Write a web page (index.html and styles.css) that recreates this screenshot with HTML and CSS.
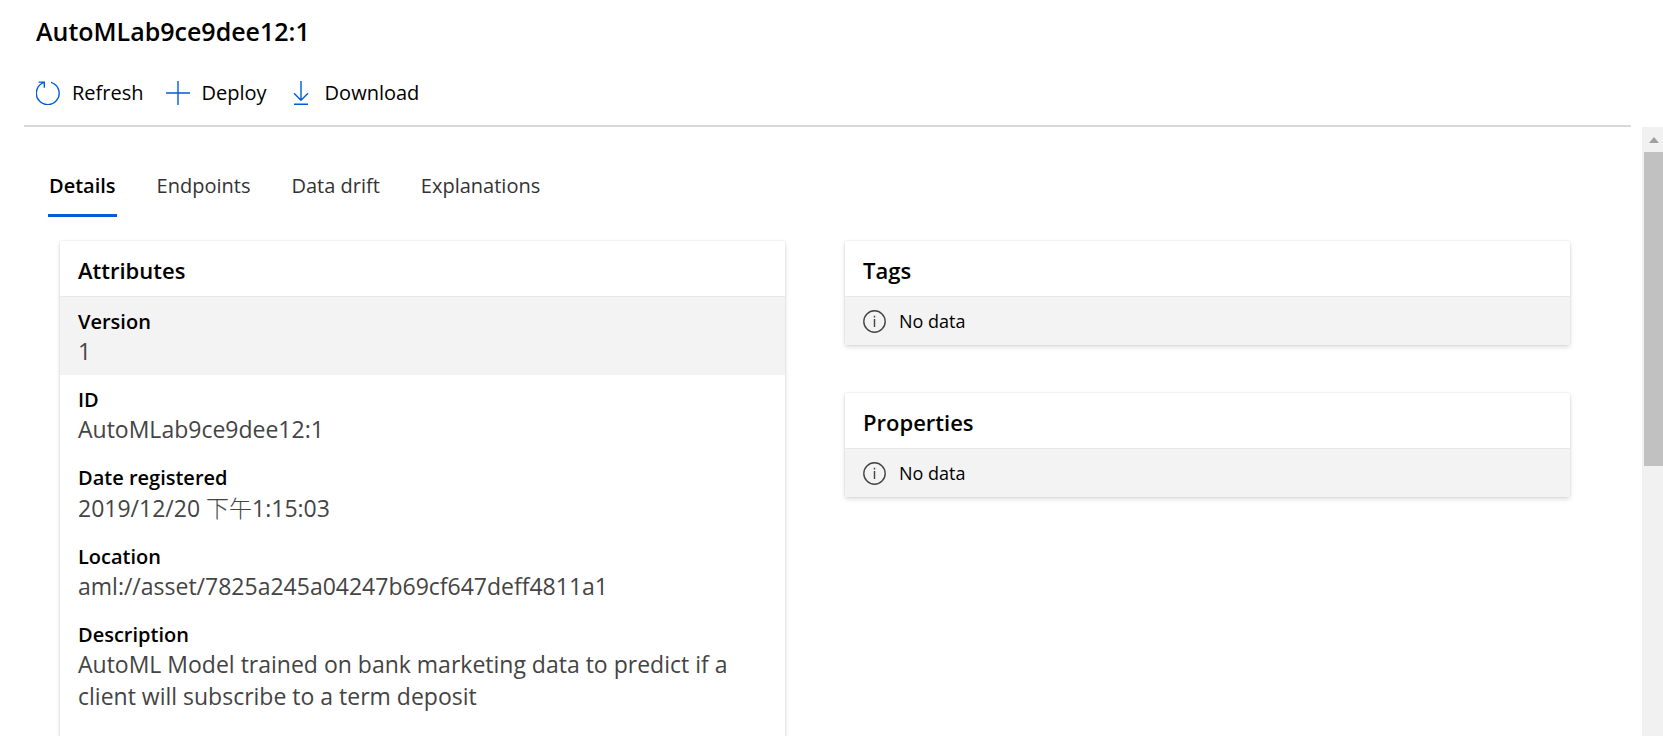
FILE: index.html
```html
<!DOCTYPE html>
<html lang="en">
<head>
<meta charset="utf-8">
<meta name="viewport" content="width=device-width, initial-scale=1">
<title>AutoMLab9ce9dee12:1</title>
<link rel="stylesheet" href="styles.css">
</head>
<body>
<header class="page-header">
  <h1 class="page-title">AutoMLab9ce9dee12:1</h1>
  <div class="toolbar" role="toolbar" aria-label="Model actions">
    <button class="command" type="button">
      <svg class="command-icon" viewBox="0 0 24 24" aria-hidden="true"><path d="M15 1.3A11.4 11.4 0 1 1 8.2 1.4M2.6 1.1H8.3V6.8"/></svg>
      <span>Refresh</span>
    </button>
    <button class="command" type="button">
      <svg class="command-icon" viewBox="0 0 24 24" aria-hidden="true"><path d="M12 0V24M0 12H24"/></svg>
      <span>Deploy</span>
    </button>
    <button class="command" type="button">
      <svg class="command-icon" viewBox="0 0 24 24" aria-hidden="true"><path d="M12 0V19M5 12.3L12 19.3L19 12.3M5 23.3H19"/></svg>
      <span>Download</span>
    </button>
  </div>
</header>
<div class="viewport">
  <main class="content">
    <div class="tabs" role="tablist">
      <button class="tab tab-active" type="button" role="tab" aria-selected="true">Details</button>
      <button class="tab" type="button" role="tab" aria-selected="false">Endpoints</button>
      <button class="tab" type="button" role="tab" aria-selected="false">Data drift</button>
      <button class="tab" type="button" role="tab" aria-selected="false">Explanations</button>
    </div>
    <div class="columns">
      <section class="card">
        <h2 class="card-title">Attributes</h2>
        <dl class="attributes">
          <div class="attribute attribute-shaded"><dt>Version</dt><dd>1</dd></div>
          <div class="attribute"><dt>ID</dt><dd>AutoMLab9ce9dee12:1</dd></div>
          <div class="attribute"><dt>Date registered</dt><dd>2019/12/20 <span class="cjk" lang="zh-Hant">下午</span>1:15:03</dd></div>
          <div class="attribute"><dt>Location</dt><dd>aml://asset/7825a245a04247b69cf647deff4811a1</dd></div>
          <div class="attribute"><dt>Description</dt><dd>AutoML Model trained on bank marketing data to predict if a client will subscribe to a term deposit</dd></div>
        </dl>
      </section>
      <div class="side">
        <section class="card">
          <h2 class="card-title">Tags</h2>
          <p class="empty">
            <svg class="info-icon" viewBox="0 0 23 23" aria-hidden="true"><circle cx="11.5" cy="11.5" r="10.7"/><path d="M11.5 9V17M11.5 5.8V7.4"/></svg>
            <span>No data</span>
          </p>
        </section>
        <section class="card">
          <h2 class="card-title">Properties</h2>
          <p class="empty">
            <svg class="info-icon" viewBox="0 0 23 23" aria-hidden="true"><circle cx="11.5" cy="11.5" r="10.7"/><path d="M11.5 9V17M11.5 5.8V7.4"/></svg>
            <span>No data</span>
          </p>
        </section>
      </div>
    </div>
  </main>
  <div class="scrollbar" aria-hidden="true">
    <div class="scroll-up"><svg class="scroll-arrow" viewBox="0 0 10 6"><path d="M5 0L10 6H0Z"/></svg></div>
    <div class="scroll-thumb"></div>
  </div>
</div>
</body>
</html>
```

FILE: styles.css
```css
* { box-sizing: border-box; }

body {
  margin: 0;
  height: 100vh;
  display: flex;
  flex-direction: column;
  overflow: hidden;
  background: #fff;
  color: #000;
  font-family: "Open Sans", "Noto Sans", "Noto Sans CJK TC", sans-serif;
  font-size: 20px;
}

h1, h2, p, dl, dd { margin: 0; }

button {
  font: inherit;
  color: inherit;
  background: none;
  border: 0;
  padding: 0;
}

.page-header {
  flex: none;
  margin: 0 32px 0 24px;
  padding: 13px 12px 16px;
  border-bottom: 2px solid #d9d9d9;
}

.page-title {
  font-size: 25px;
  line-height: 36px;
  font-weight: 600;
}

.toolbar {
  display: flex;
  gap: 22px;
  margin-top: 28px;
}

.command {
  display: flex;
  align-items: center;
  gap: 12px;
  line-height: 32px;
}

.command-icon {
  width: 24px;
  height: 24px;
  fill: none;
  stroke: #015cda;
  stroke-width: 1.4;
}

.viewport {
  flex: 1;
  min-height: 0;
  display: flex;
}

.content {
  flex: 1;
  min-width: 0;
  overflow: hidden;
  padding: 40px 72px 0 60px;
}

.tabs {
  display: flex;
  gap: 39px;
  margin-left: -12px;
}

.tab {
  height: 50px;
  padding: 0 1px 10px;
  line-height: 36px;
  border-bottom: 3px solid transparent;
  color: #333;
}

.tab-active {
  color: #000;
  font-weight: 600;
  border-bottom-color: #015cda;
}

.columns {
  display: grid;
  grid-template-columns: 1fr 1fr;
  gap: 60px;
  margin-top: 24px;
}

.side {
  display: flex;
  flex-direction: column;
  gap: 48px;
}

.card {
  background: #fff;
  border-radius: 2px;
  box-shadow: 0 2px 5px rgba(0, 0, 0, 0.14), 0 0 2px rgba(0, 0, 0, 0.12);
}

.card-title {
  padding: 11px 18px 7px;
  font-size: 22px;
  line-height: 37px;
  font-weight: 600;
  border-bottom: 1px solid #e8e8e8;
}

.attributes { padding-bottom: 24px; }

.attribute {
  padding: 12px 18px 8px;
}

.attribute-shaded { background: #f3f3f3; }

.attribute dt {
  font-size: 20px;
  line-height: 26px;
  font-weight: 600;
}

.attribute dd {
  font-size: 23px;
  line-height: 32px;
  color: #444;
}

.cjk {
  font-family: "Noto Sans CJK TC", sans-serif;
  font-weight: 300;
}

.empty {
  display: flex;
  align-items: center;
  gap: 13px;
  height: 48px;
  padding: 0 18px;
  background: #f3f3f3;
  font-size: 18px;
}

.info-icon {
  width: 23px;
  height: 23px;
  fill: none;
  stroke: #444;
  stroke-width: 1.4;
}

.scrollbar {
  flex: none;
  width: 21px;
  padding-left: 2px;
  background: #f1f1f1;
}

.scroll-up {
  display: flex;
  align-items: center;
  justify-content: center;
  height: 25px;
}

.scroll-arrow {
  width: 10px;
  height: 6px;
  fill: #a0a0a0;
}

.scroll-thumb {
  height: 314px;
  background: #c1c1c1;
}
```
